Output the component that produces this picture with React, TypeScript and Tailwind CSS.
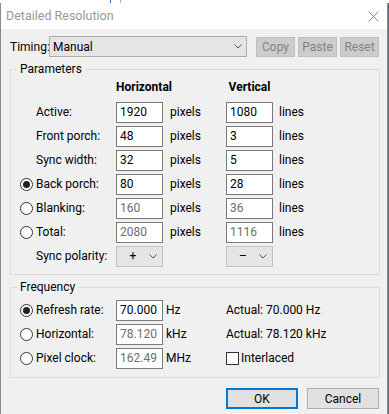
import React from "react";

type FieldProps = { value: string; disabled?: boolean };

function Field({ value, disabled }: FieldProps) {
  return (
    <div
      className={`w-[47px] h-[21px] border border-[#7a7a7a] bg-white pl-[3px] flex items-center ${
        disabled ? "text-[#6d6d6d]" : "text-[#000]"
      }`}
    >
      {value}
    </div>
  );
}

function Radio({ checked }: { checked?: boolean }) {
  return (
    <span className="w-[13px] h-[13px] rounded-full border border-[#333] bg-white flex items-center justify-center">
      {checked && <span className="w-[7px] h-[7px] rounded-full bg-[#222]" />}
    </span>
  );
}

function Chevron() {
  return (
    <svg width="8" height="5" viewBox="0 0 8 5" className="text-[#555]">
      <path d="M0.5 0.5 L4 4 L7.5 0.5" fill="none" stroke="currentColor" strokeWidth="1" />
    </svg>
  );
}

function Combo({ glyph }: { glyph: string }) {
  return (
    <div className="w-[47px] h-[21px] border border-[#c2c2c2] bg-[#e5e5e5] flex items-center">
      <span className="w-[32px] text-center text-[#000]">{glyph}</span>
      <Chevron />
    </div>
  );
}

type ParamRow = {
  label: string;
  h: string;
  v: string;
  radio?: boolean;
  checked?: boolean;
  disabled?: boolean;
};

const paramRows: ParamRow[] = [
  { label: "Active:", h: "1920", v: "1080" },
  { label: "Front porch:", h: "48", v: "3" },
  { label: "Sync width:", h: "32", v: "5" },
  { label: "Back porch:", h: "80", v: "28", radio: true, checked: true },
  { label: "Blanking:", h: "160", v: "36", radio: true, disabled: true },
  { label: "Total:", h: "2080", v: "1116", radio: true, disabled: true },
];

const freqRows = [
  { label: "Refresh rate:", value: "70.000", unit: "Hz", checked: true, extra: "Actual: 70.000 Hz" },
  { label: "Horizontal:", value: "78.120", unit: "kHz", disabled: true, extra: "Actual: 78.120 kHz" },
  { label: "Pixel clock:", value: "162.49", unit: "MHz", disabled: true, extra: "" },
];

export default function App() {
  return (
    <div className="w-[389px] h-[414px] bg-[#5b6b7c] overflow-hidden font-['Segoe_UI',Roboto,'Noto_Sans',sans-serif] text-[12px] leading-[16px] text-[#000]">
      {/* bits of the window behind */}
      <div className="h-[3px] bg-white flex">
        <div className="w-[110px]" />
        <div className="w-[1px] bg-[#2a6fb8]" />
        <div className="w-[9px]" />
        <div className="w-[1px] bg-[#b0b0b0]" />
      </div>

      <div className="w-[388px] h-[411px] border-x border-[#8a8a8a] bg-[#f0f0f0] flex flex-col">
        {/* Title bar */}
        <div className="h-[26px] bg-white flex items-center justify-between pl-[5px] pr-[8px]">
          <span className="text-[#9a9a9a] text-[12.5px]">Detailed Resolution</span>
          <svg width="11" height="11" viewBox="0 0 11 11">
            <path d="M0.5 0.5 L10.5 10.5 M10.5 0.5 L0.5 10.5" stroke="#8a8a8a" strokeWidth="1" />
          </svg>
        </div>

        {/* Timing */}
        <div className="mt-[7px] h-[21px] flex items-center pl-[9px]">
          <span className="w-[39px]">Timing:</span>
          <div className="w-[198px] h-[21px] border border-[#adadad] bg-[#e5e5e5] flex items-center justify-between pl-[3px] pr-[4px]">
            <span>Manual</span>
            <Chevron />
          </div>
          <div className="ml-[9px] flex gap-[3px]">
            {["Copy", "Paste", "Reset"].map((b) => (
              <div
                key={b}
                className="w-[39px] h-[20px] border border-[#bfbfbf] bg-[#cccccc] text-[#838383] flex items-center justify-center"
              >
                {b}
              </div>
            ))}
          </div>
        </div>

        {/* Parameters */}
        <fieldset className="mt-[4px] ml-[9px] w-[370px] border border-[#dcdcdc] pb-[6px]">
          <legend className="ml-[6px] px-[3px]">Parameters</legend>
          <div className="flex h-[16px] mt-[2px] font-bold text-[#000]">
            <span className="ml-[105px] w-[47px] text-center">Horizontal</span>
            <span className="ml-[63px] w-[47px] text-center">Vertical</span>
          </div>
          <div className="mt-[5px] flex flex-col">
            {paramRows.map((r) => (
              <div key={r.label} className="h-[24px] flex items-center pl-[9px]">
                <span className="w-[16px] flex">{r.radio && <Radio checked={r.checked} />}</span>
                <span className="w-[80px]">{r.label}</span>
                <Field value={r.h} disabled={r.disabled} />
                <span className="ml-[7px] w-[56px]">pixels</span>
                <Field value={r.v} disabled={r.disabled} />
                <span className="ml-[6px]">lines</span>
              </div>
            ))}
            <div className="h-[24px] flex items-center pl-[9px]">
              <span className="w-[16px]" />
              <span className="w-[80px]">Sync polarity:</span>
              <Combo glyph="+" />
              <span className="w-[63px]" />
              <Combo glyph="–" />
            </div>
          </div>
        </fieldset>

        {/* Frequency */}
        <fieldset className="mt-[4px] ml-[9px] w-[370px] border border-[#dcdcdc] pb-[7px]">
          <legend className="ml-[6px] px-[3px]">Frequency</legend>
          <div className="mt-[3px] flex flex-col">
            {freqRows.map((r) => (
              <div key={r.label} className="h-[24px] flex items-center pl-[9px]">
                <span className="w-[16px] flex">
                  <Radio checked={r.checked} />
                </span>
                <span className="w-[80px]">{r.label}</span>
                <Field value={r.value} disabled={r.disabled} />
                <span className="ml-[3px] w-[60px]">{r.unit}</span>
                {r.extra ? (
                  <span>{r.extra}</span>
                ) : (
                  <span className="flex items-center gap-[2px]">
                    <span className="w-[13px] h-[13px] border border-[#333] bg-white" />
                    <span>Interlaced</span>
                  </span>
                )}
              </div>
            ))}
          </div>
        </fieldset>

        {/* Dialog buttons */}
        <div className="mt-[10px] flex justify-end gap-[9px] pr-[8px]">
          <div className="w-[72px] h-[21px] border-2 border-[#0078d7] bg-[#e1e1e1] flex items-center justify-center">
            OK
          </div>
          <div className="w-[72px] h-[21px] border border-[#adadad] bg-[#e1e1e1] flex items-center justify-center">
            Cancel
          </div>
        </div>
      </div>
    </div>
  );
}
